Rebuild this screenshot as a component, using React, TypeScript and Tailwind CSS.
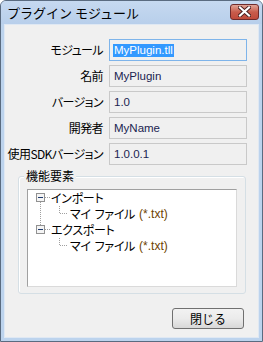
import React from 'react';

const jp = "font-['Noto_Sans_CJK_JP','Noto_Sans',sans-serif]";
const latin = "font-['Liberation_Sans','Noto_Sans_CJK_JP',sans-serif]";

function Field({ label, value, focused }: { label: string; value: string; focused?: boolean }) {
  return (
    <div className="flex items-center">
      <div
        className={`w-[98px] whitespace-nowrap text-right text-[12px] leading-none tracking-[-0.6px] text-black ${jp} [font-feature-settings:'palt']`}
      >
        {label}
      </div>
      <div
        className={`ml-[6px] flex h-[22px] w-[138px] items-center border px-[3px] ${
          focused ? 'border-[#7eb4ea] bg-[#f0f0f0]' : 'border-[#c9c9c9] bg-[#f0f0f0]'
        }`}
      >
        {focused ? (
          <span className={`bg-[#3399ff] px-[1px] text-[11.5px] leading-[13px] text-white ${latin}`}>{value}</span>
        ) : (
          <span className={`px-[1px] text-[11.5px] leading-[13px] text-[#1a2450] ${latin}`}>{value}</span>
        )}
      </div>
    </div>
  );
}

function Expander({ lineAbove, lineBelow }: { lineAbove?: boolean; lineBelow?: boolean }) {
  return (
    <svg width="22" height="16" className="shrink-0">
      {lineAbove && <line x1="12.5" y1="0" x2="12.5" y2="4" stroke="#a0a0a0" strokeDasharray="1 1" />}
      <rect x="8.5" y="3.5" width="8" height="8" fill="#f4f4f4" stroke="#919191" />
      <line x1="10" y1="7.5" x2="15" y2="7.5" stroke="#1e3a6e" />
      <line x1="17" y1="7.5" x2="22" y2="7.5" stroke="#a0a0a0" strokeDasharray="1 1" />
      {lineBelow && <line x1="12.5" y1="12" x2="12.5" y2="16" stroke="#a0a0a0" strokeDasharray="1 1" />}
    </svg>
  );
}

function Branch({ through }: { through?: boolean }) {
  return (
    <svg width="42" height="16" className="shrink-0">
      {through && <line x1="12.5" y1="0" x2="12.5" y2="16" stroke="#a0a0a0" strokeDasharray="1 1" />}
      <line x1="31.5" y1="0" x2="31.5" y2="8" stroke="#a0a0a0" strokeDasharray="1 1" />
      <line x1="32" y1="7.5" x2="39" y2="7.5" stroke="#a0a0a0" strokeDasharray="1 1" />
    </svg>
  );
}

function FileItem({ through }: { through?: boolean }) {
  return (
    <div className="flex h-[16px] items-center">
      <Branch through={through} />
      <span className={`flex whitespace-nowrap text-[12px] leading-none tracking-[-0.3px] text-black ${jp} [font-feature-settings:'palt']`}>
        <span>マイ</span>
        <span className="ml-[4px]">ファイル</span>
        <span className={`ml-[4px] ${latin} text-[12px] tracking-normal text-[#6e4300]`}>(*.txt)</span>
      </span>
    </div>
  );
}

export default function App() {
  return (
    <div className="flex h-[342px] w-[263px] flex-col overflow-hidden rounded-t-[6px] border border-[#5a6b80] bg-[#bcd3ed]">
      {/* title bar */}
      <div className="flex h-[23px] shrink-0 items-center justify-between bg-gradient-to-b from-[#c6d9f0] to-[#b8cfeb] pl-[6px] pr-[3px]">
        <span className={`text-[13px] leading-none text-black ${jp}`}>プラグイン モジュール</span>
        <div className="mt-[-2px] flex h-[16px] w-[29px] items-center justify-center rounded-[3px] border border-[#6e2b2b] bg-gradient-to-b from-[#e0a496] via-[#c85c4c] to-[#c04a3a]">
          <svg width="13" height="11" viewBox="0 0 13 11">
            <path d="M2 1.5 L11 9.5 M11 1.5 L2 9.5" stroke="#4a2020" strokeWidth="4" strokeLinecap="square" />
            <path d="M2 1.5 L11 9.5 M11 1.5 L2 9.5" stroke="#ffffff" strokeWidth="2.2" strokeLinecap="square" />
          </svg>
        </div>
      </div>

      {/* client area */}
      <div className="mx-[3px] mb-[3px] flex flex-1 flex-col border border-[#dfe8f3] bg-[#f0f0f0]">
        <div className="flex flex-col gap-[4px] pt-[14px]">
          <Field label="モジュール" value="MyPlugin.tll" focused />
          <Field label="名前" value="MyPlugin" />
          <Field label="バージョン" value="1.0" />
          <Field label="開発者" value="MyName" />
          <Field label="使用SDKバージョン" value="1.0.0.1" />
        </div>

        {/* group box */}
        <div className="relative ml-[13px] mt-[11px] h-[118px] w-[228px] rounded-[3px] border border-[#d5dfe5] shadow-[inset_1px_1px_0_#ffffff]">
          <span className={`absolute left-[5px] top-[-9px] bg-[#f0f0f0] px-[2px] text-[12px] leading-[16px] text-black ${jp}`}>
            機能要素
          </span>
          <div className="ml-[8px] mt-[12px] h-[98px] w-[210px] border border-[#a0a0a0] border-b-[#dadada] border-r-[#dadada] bg-white">
            <div className="flex h-[16px] items-center">
              <Expander lineBelow />
              <span className={`pl-[1px] text-[12px] leading-none tracking-[-0.3px] text-black ${jp} [font-feature-settings:'palt']`}>インポート</span>
            </div>
            <FileItem through />
            <div className="flex h-[16px] items-center">
              <Expander lineAbove />
              <span className={`pl-[1px] text-[12px] leading-none tracking-[-0.3px] text-black ${jp} [font-feature-settings:'palt']`}>エクスポート</span>
            </div>
            <FileItem />
          </div>
        </div>

        {/* footer */}
        <div className="mt-[14px] flex justify-end pr-[14px]">
          <button
            className={`flex h-[21px] w-[72px] items-center justify-center rounded-[3px] border border-[#707070] bg-gradient-to-b from-[#f2f2f2] via-[#ebebeb] to-[#d8d8d8] text-[12px] leading-none text-black ${jp}`}
          >
            閉じる
          </button>
        </div>
      </div>
    </div>
  );
}
